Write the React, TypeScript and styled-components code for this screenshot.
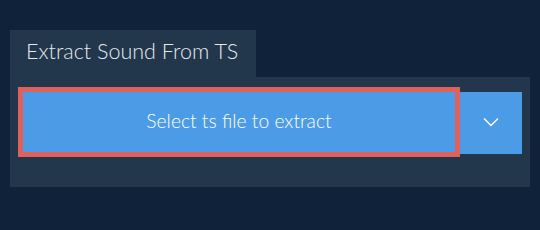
import React from 'react';
import styled, { createGlobalStyle } from 'styled-components';

const GlobalStyle = createGlobalStyle`
  html, body {
    margin: 0;
    padding: 0;
    background: #10223a;
    font-family: Lato, "Open Sans", sans-serif;
  }
`;

const Page = styled.div`
  width: 540px;
  height: 230px;
  padding: 30px 10px 0 10px;
  box-sizing: border-box;
`;

const Tab = styled.div`
  display: inline-block;
  width: 246px;
  height: 47px;
  box-sizing: border-box;
  padding: 7px 0 0 16px;
  background: #22364c;
  color: #e6eaee;
  font-size: 21.5px;
  font-weight: 300;
  line-height: 28px;
  vertical-align: top;
`;

const Panel = styled.div`
  background: #22364c;
  padding: 10px 8px 30px 8px;
  display: flex;
  align-items: flex-start;
`;

const MainButton = styled.button`
  flex: 1;
  height: 70px;
  border: 5px solid #e0605c;
  background: #4b9be6;
  color: #ffffff;
  font-family: inherit;
  font-size: 19.3px;
  font-weight: 300;
  padding: 0 0 3px 0;
  cursor: pointer;
`;

const DropButton = styled.button`
  width: 62px;
  height: 62px;
  margin-top: 5px;
  border: none;
  background: #4b9be6;
  display: flex;
  align-items: center;
  justify-content: center;
  padding: 0 0 2px 0;
  cursor: pointer;
`;

export default function App() {
  return (
    <>
      <GlobalStyle />
      <Page>
        <Tab>Extract Sound From TS</Tab>
        <Panel>
          <MainButton>Select ts file to extract</MainButton>
          <DropButton>
            <svg width="16" height="10" viewBox="0 0 16 10" fill="none">
              <path d="M1 1.5 L8 8.5 L15 1.5" stroke="#ffffff" strokeWidth="1.4" />
            </svg>
          </DropButton>
        </Panel>
      </Page>
    </>
  );
}
